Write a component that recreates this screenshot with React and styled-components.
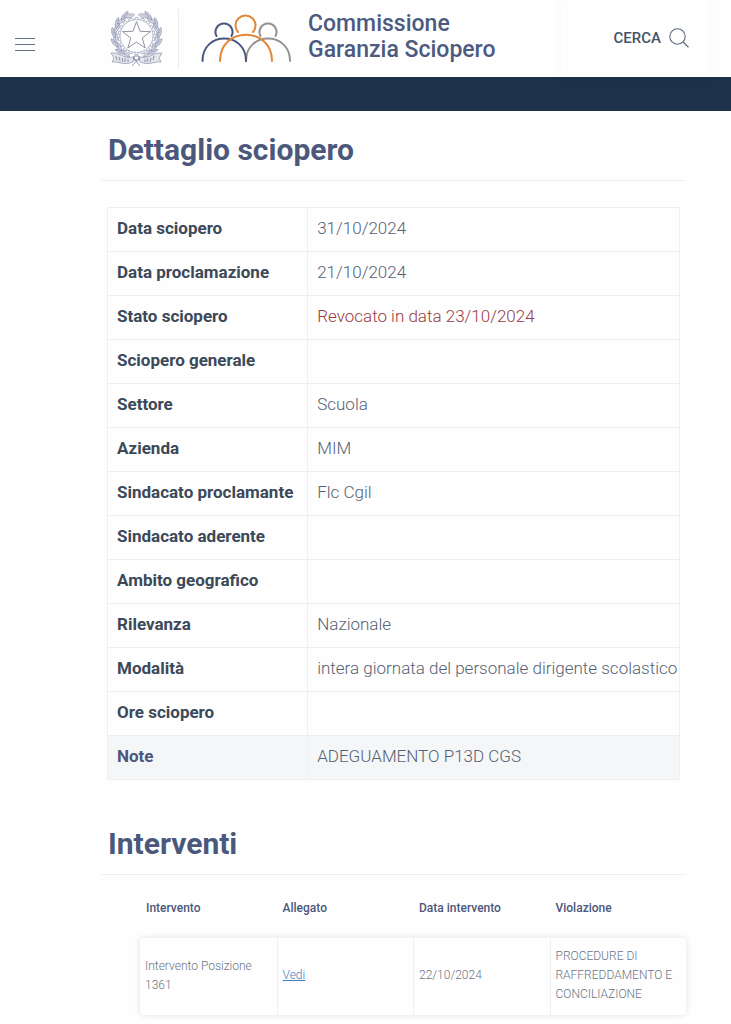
import React from "react";
import styled, { createGlobalStyle } from "styled-components";

const details = [
  { label: "Data sciopero", value: "31/10/2024" },
  { label: "Data proclamazione", value: "21/10/2024" },
  { label: "Stato sciopero", value: "Revocato in data 23/10/2024", revoked: true },
  { label: "Sciopero generale", value: "" },
  { label: "Settore", value: "Scuola" },
  { label: "Azienda", value: "MIM" },
  { label: "Sindacato proclamante", value: "Flc Cgil" },
  { label: "Sindacato aderente", value: "" },
  { label: "Ambito geografico", value: "" },
  { label: "Rilevanza", value: "Nazionale" },
  { label: "Modalità", value: "intera giornata del personale dirigente scolastico" },
  { label: "Ore sciopero", value: "" },
  { label: "Note", value: "ADEGUAMENTO P13D CGS", active: true },
];

const interventi = [
  {
    name: "Intervento Posizione 1361",
    date: "22/10/2024",
    violation: "PROCEDURE DI RAFFREDDAMENTO E CONCILIAZIONE",
  },
];

// leaf angles on the wreath, from the ribbon up to the gap at the top
const leafAngles = [58, 45, 32, 19, 6, -7, -20, -33, -46, -59, -70];

function wreathLeaves(side) {
  return leafAngles.map((angle, i) => {
    const a = (angle * Math.PI) / 180;
    const radius = i % 2 ? 23 : 21;
    return {
      x: 27.5 + side * radius * Math.cos(a),
      y: 26.5 + radius * Math.sin(a),
      turn: side * (angle + (i % 2 ? 22 : -8)),
    };
  });
}

function Emblem() {
  const teeth = Array.from({ length: 18 }, (_, i) => i * 20);
  return (
    <EmblemSvg viewBox="0 0 56 60" aria-hidden="true">
      <g fill="none" stroke="#a3a7bb">
        <circle cx="27.5" cy="27" r="16.5" strokeWidth="0.8" />
        {teeth.map((t) => (
          <path
            key={t}
            d="M25.5 10.5 L26 8.5 H29 L29.5 10.5"
            strokeWidth="0.8"
            transform={`rotate(${t} 27.5 27)`}
          />
        ))}
      </g>
      {[-1, 1].map((side) =>
        wreathLeaves(side).map((l, i) => (
          <g key={`${side}${i}`} transform={`translate(${l.x} ${l.y}) rotate(${l.turn})`}>
            <path
              d="M0 5.5C-2.6 2-2.2-2.5 0-5.5 2.2-2.5 2.6 2 0 5.5Z"
              fill={i % 2 ? "#d3d6e4" : "#e3e5ee"}
              stroke="#8d92ad"
              strokeWidth="0.7"
            />
            <path d="M0 4V-3" stroke="#9a9fb8" strokeWidth="0.5" />
          </g>
        ))
      )}
      <path
        d="M27.5 12.5 31 22.3 41.5 22.6 33.2 29 36.2 39 27.5 33 18.8 39 21.8 29 13.5 22.6 24 22.3Z"
        fill="#fff"
        stroke="#858999"
        strokeWidth="0.9"
      />
      <path
        d="M2 44C10 43 14 50 25 48L24 53C14 57 10 52 3 53L5 49ZM53 44C45 43 41 50 30 48L31 53C41 57 45 52 52 53L50 49Z"
        fill="#e4e6ee"
        stroke="#959ab1"
        strokeWidth="0.8"
      />
      <path
        d="M7 47l1 4M10 48l1 4M13 49l1 4M16 49v4M19 50v3M36 50v3M39 49l-1 4M42 49l-1 4M45 47l-1 4M24 48l7 9M31 48l-8 9M25 47h5v4h-5Z"
        fill="none"
        stroke="#858ba6"
        strokeWidth="0.9"
      />
    </EmblemSvg>
  );
}

function People() {
  return (
    <PeopleSvg viewBox="0 0 92 50" aria-hidden="true">
      <g fill="none" strokeWidth="2" strokeLinecap="round">
        <path d="M46 47C46 17 90 17 90 47" stroke="#939290" />
        <path d="M60.5 22A8.5 8.5 0 1 1 75.5 22" stroke="#939290" />
        <path d="M2.5 47C2.5 17 46 17 46 47" stroke="#49567c" />
        <path d="M16.5 22A8.5 8.5 0 1 1 31.500 22" stroke="#49567c" />
        <path d="M20 47C20 12 72 12 72 47" stroke="#e28736" />
        <path d="M38 18A10 10 0 1 1 53 18" stroke="#e28736" />
      </g>
    </PeopleSvg>
  );
}

export default function App() {
  return (
    <>
      <GlobalStyle />
      <Header>
        <MenuButton type="button" aria-label="Menu">
          <span />
          <span />
          <span />
        </MenuButton>
        <Brand>
          <EmblemBox>
            <Emblem />
          </EmblemBox>
          <People />
          <BrandName>
            Commissione
            <br />
            Garanzia Sciopero
          </BrandName>
        </Brand>
        <Search>
          <SearchButton type="button">
            CERCA
            <svg viewBox="0 0 20 20" width="20" height="20" aria-hidden="true">
              <circle cx="8.5" cy="8.5" r="7.7" fill="none" stroke="#5c6878" strokeWidth="1.1" />
              <path d="M14 14l5.5 5.3" stroke="#5c6878" strokeWidth="1.2" />
            </svg>
          </SearchButton>
        </Search>
      </Header>
      <NavBar />
      <Main>
        <Title as="h1">Dettaglio sciopero</Title>
        <DetailTable>
          <tbody>
            {details.map((row) => (
              <DetailRow key={row.label} $active={row.active}>
                <th scope="row">{row.label}</th>
                <DetailValue $revoked={row.revoked}>{row.value}</DetailValue>
              </DetailRow>
            ))}
          </tbody>
        </DetailTable>
        <Title>Interventi</Title>
        <InterventiTable>
          <thead>
            <tr>
              <th scope="col">Intervento</th>
              <th scope="col">Allegato</th>
              <th scope="col">Data intervento</th>
              <th scope="col">Violazione</th>
            </tr>
          </thead>
          <tbody>
            {interventi.map((item) => (
              <tr key={item.name}>
                <td>{item.name}</td>
                <td>
                  <a href="#vedi">Vedi</a>
                </td>
                <td>{item.date}</td>
                <td>{item.violation}</td>
              </tr>
            ))}
          </tbody>
        </InterventiTable>
      </Main>
    </>
  );
}

const GlobalStyle = createGlobalStyle`
  * {
    box-sizing: border-box;
  }

  body {
    margin: 0;
    background: #fefefe;
    color: #5f6b7c;
    font-family: Roboto, "Open Sans", sans-serif;
    font-weight: 300;
  }
`;

const Header = styled.header`
  display: flex;
  align-items: stretch;
  height: 77px;
`;

const MenuButton = styled.button`
  display: flex;
  flex-direction: column;
  justify-content: center;
  gap: 5px;
  width: 50px;
  padding: 12px 15px 0;
  border: 0;
  background: none;

  span {
    height: 1px;
    background: #66717f;
  }
`;

const Brand = styled.div`
  display: flex;
  flex: 1;
  align-items: flex-start;
  padding: 9px 0 0 59px;
`;

const EmblemBox = styled.div`
  height: 60px;
  padding-right: 13px;
  margin-right: 21px;
  border-right: 1px solid #eeeef1;
`;

const EmblemSvg = styled.svg`
  display: block;
  width: 56px;
  height: 60px;
`;

const PeopleSvg = styled.svg`
  width: 92px;
  height: 50px;
  margin-top: 5px;
`;

const BrandName = styled.div`
  margin: 2px 0 0 16px;
  color: #4d5a80;
  font-size: 23px;
  font-weight: 500;
  line-height: 26px;
  white-space: nowrap;
`;

const Search = styled.div`
  display: flex;
  align-items: center;
  justify-content: flex-end;
  width: 148px;
  margin-right: 22px;
  padding: 0 20px 2px 0;
  box-shadow: 0 0 8px rgba(0, 0, 0, 0.03);
`;

const SearchButton = styled.button`
  display: flex;
  align-items: center;
  gap: 8px;
  padding: 0;
  border: 0;
  background: none;
  color: #455366;
  font-family: inherit;
  font-size: 15px;
  font-weight: 500;
`;

const NavBar = styled.nav`
  height: 34px;
  background: #1e314b;
`;

const Main = styled.main`
  padding: 19px 45px 9px 101px;
`;

const Title = styled.h2`
  margin: 0 0 26px;
  padding: 0 7px 10px;
  border-bottom: 1px solid #eeeff1;
  color: #4b587c;
  font-size: 30px;
  font-weight: 700;
  line-height: 40px;
`;

const DetailTable = styled.table`
  width: calc(100% - 12px);
  margin: 0 6px 44px;
  border-collapse: collapse;
  font-size: 17px;
  line-height: 24px;

  th,
  td {
    height: 44px;
    padding: 8px 0 11px 9px;
    border: 1px solid #eeeff1;
    text-align: left;
    vertical-align: top;
  }

  th {
    width: 35%;
    font-weight: 700;
  }
`;

const DetailRow = styled.tr`
  background: ${({ $active }) => ($active ? "#f4f6f8" : "transparent")};

  th {
    color: ${({ $active }) => ($active ? "#4b587c" : "#3b4959")};
  }
`;

const DetailValue = styled.td`
  color: ${({ $revoked }) => ($revoked ? "#973c42" : "#566273")};
`;

const InterventiTable = styled.table`
  width: calc(100% - 39px);
  margin: -2px 0 0 39px;
  border-spacing: 0;
  table-layout: fixed;
  font-size: 12px;
  line-height: 19px;
  text-align: left;

  th {
    padding: 0 6px 20px;
    color: #4b587c;
    font-weight: 500;
  }

  td {
    height: 77px;
    padding: 9px 5px 11px;
    border-left: 1px solid #eeeff1;
    color: #6b7486;
  }

  td:first-child {
    border-left: 0;
    border-radius: 4px 0 0 4px;
  }

  td:last-child {
    border-radius: 0 4px 4px 0;
  }

  tbody tr {
    border-radius: 4px;
    box-shadow: 0 0 6px rgba(0, 0, 0, 0.12);
  }

  a {
    color: #3f7fbf;
  }
`;
